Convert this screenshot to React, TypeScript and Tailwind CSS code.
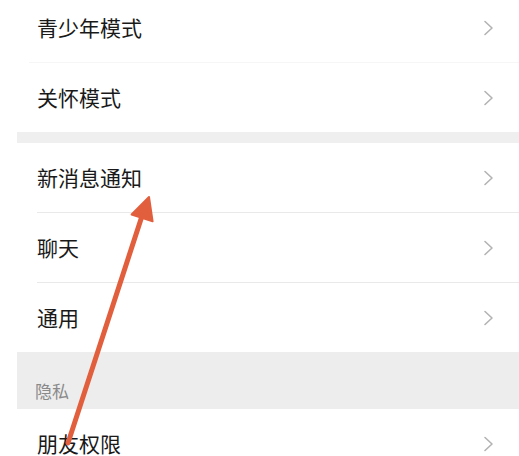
import React from "react";

const Chevron = () => (
  <svg width="12" height="16" viewBox="0 0 12 16" fill="none" className="shrink-0">
    <path d="M2 1.5 L9 8 L2 14.5" stroke="#b3b3b3" strokeWidth="1.6" strokeLinecap="round" strokeLinejoin="round" />
  </svg>
);

type RowProps = { label: string; divider?: "faint" | "line" | null };

const Row = ({ label, divider = null }: RowProps) => (
  <div className="relative flex h-[69px] items-center justify-between pl-[20px] pr-[24px]">
    <span className="text-[21px] leading-none text-[#191919]">{label}</span>
    <Chevron />
    {divider === "line" && <div className="absolute bottom-[-1px] left-[20px] right-0 h-px bg-[#e9e9e9]" />}
    {divider === "faint" && <div className="absolute bottom-[-1px] left-[12px] right-0 h-px bg-[#f6f6f6]" />}
  </div>
);

export default function App() {
  return (
    <div
      className="relative h-[456px] w-[519px] overflow-hidden bg-white"
      style={{ fontFamily: '"Noto Sans CJK SC", "Noto Sans", sans-serif' }}
    >
      <div className="ml-[17px] -mt-[7px] flex flex-col">
        <Row label="青少年模式" divider="faint" />
        <div className="h-px" />
        <Row label="关怀模式" />
        <div className="h-[11px] bg-[#efefef]" />
        <Row label="新消息通知" divider="line" />
        <div className="h-px" />
        <Row label="聊天" divider="line" />
        <div className="h-px" />
        <Row label="通用" />
        <div className="flex h-[57px] items-end bg-[#ededed] pb-[7px] pl-[18px]">
          <span className="text-[17px] leading-[22px] text-[#8a8a8a]">隐私</span>
        </div>
        <Row label="朋友权限" />
      </div>

      {/* annotation arrow */}
      <svg className="pointer-events-none absolute left-0 top-0" width="519" height="456" viewBox="0 0 519 456">
        <line x1="68" y1="443" x2="142" y2="216" stroke="#e25f3e" strokeWidth="5" strokeLinecap="round" />
        <polygon points="149,197 152.6,221.3 131.6,214.5" fill="#e25f3e" stroke="#e25f3e" strokeWidth="2" strokeLinejoin="round" />
      </svg>
    </div>
  );
}
